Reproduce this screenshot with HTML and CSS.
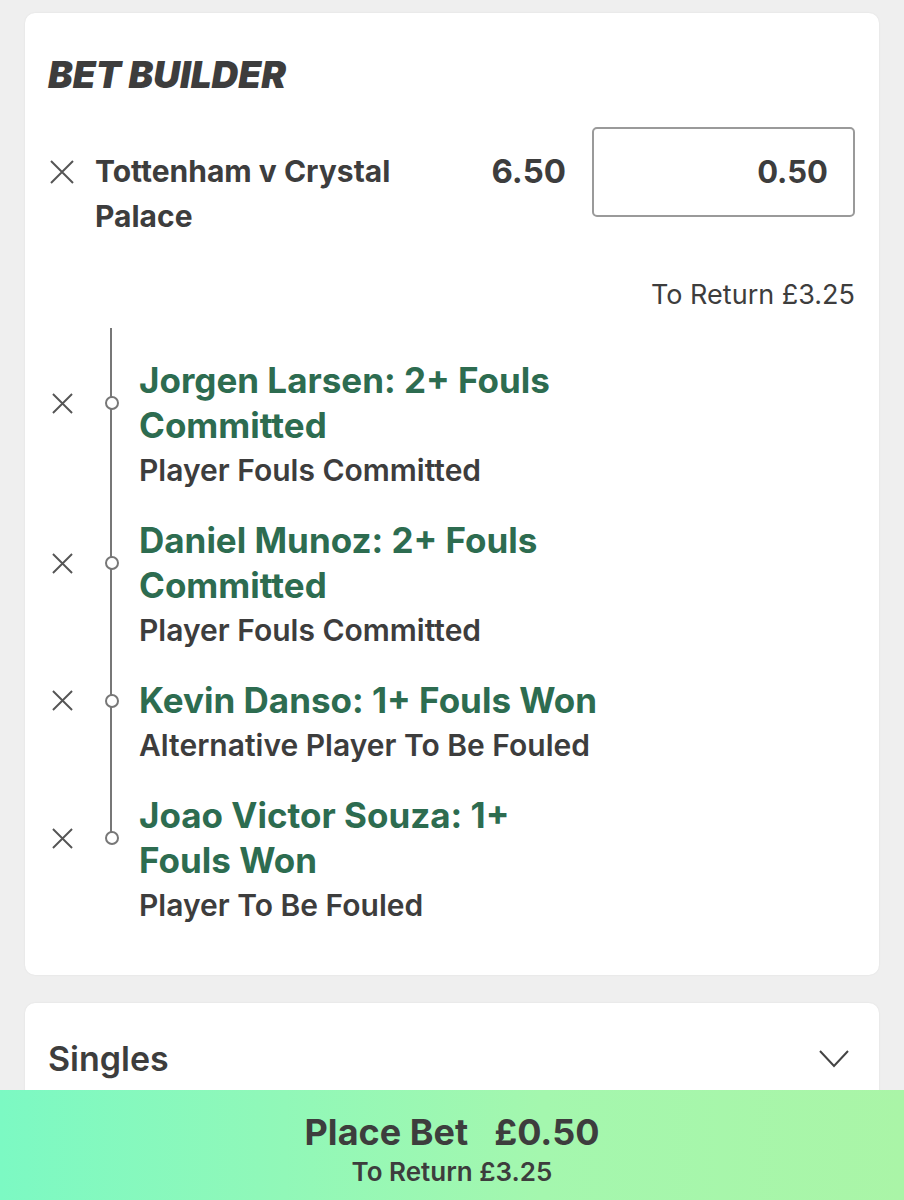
FILE: index.html
```html
<!DOCTYPE html>
<html>
<head>
    <title>Bet Slip</title>
    <link rel="stylesheet" href="styles.css">
</head>
<body>
    <div class="page">
        <div class="card builder">
            <h1 class="card-title">BET BUILDER</h1>

            <div class="main-row">
                <span class="remove big">
                    <svg viewBox="0 0 24 24" width="24" height="24"><path d="M1 1L23 23M23 1L1 23" /></svg>
                </span>
                <div class="match">Tottenham v Crystal Palace</div>
                <div class="odds">6.50</div>
                <div class="stake">0.50</div>
            </div>
            <div class="returns">To Return £3.25</div>

            <!-- Selections -->
            <div class="legs">
                <div class="leg">
                    <span class="remove">
                        <svg viewBox="0 0 22 22" width="21" height="21"><path d="M1 1L21 21M21 1L1 21" /></svg>
                    </span>
                    <span class="node"></span>
                    <div class="leg-name">Jorgen Larsen: 2+ Fouls Committed</div>
                    <div class="leg-market">Player Fouls Committed</div>
                </div>
                <div class="leg">
                    <span class="remove">
                        <svg viewBox="0 0 22 22" width="21" height="21"><path d="M1 1L21 21M21 1L1 21" /></svg>
                    </span>
                    <span class="node"></span>
                    <div class="leg-name">Daniel Munoz: 2+ Fouls Committed</div>
                    <div class="leg-market">Player Fouls Committed</div>
                </div>
                <div class="leg">
                    <span class="remove">
                        <svg viewBox="0 0 22 22" width="21" height="21"><path d="M1 1L21 21M21 1L1 21" /></svg>
                    </span>
                    <span class="node"></span>
                    <div class="leg-name">Kevin Danso: 1+ Fouls Won</div>
                    <div class="leg-market">Alternative Player To Be Fouled</div>
                </div>
                <div class="leg">
                    <span class="remove">
                        <svg viewBox="0 0 22 22" width="21" height="21"><path d="M1 1L21 21M21 1L1 21" /></svg>
                    </span>
                    <span class="node"></span>
                    <div class="leg-name">Joao Victor Souza: 1+ Fouls Won</div>
                    <div class="leg-market">Player To Be Fouled</div>
                </div>
            </div>
        </div>

        <div class="card singles">
            <span class="singles-title">Singles</span>
            <svg class="chevron" viewBox="0 0 30 18" width="30" height="18"><path d="M1 1L15 16L29 1" /></svg>
        </div>
    </div>

    <div class="place-bet">
        <div class="place-main"><span>Place Bet</span><span>£0.50</span></div>
        <div class="place-sub">To Return £3.25</div>
    </div>
</body>
</html>
```

FILE: styles.css
```css
body {
    margin: 0;
    background-color: #efefef;
    font-family: Inter, Roboto, "Liberation Sans", sans-serif;
    color: #3d3d3d;
}
.page {
    padding: 13px 25px 0;
}
.card {
    background-color: #fff;
    border-radius: 10px;
    box-shadow: 0 0 2px rgba(0,0,0,0.08);
}
.builder {
    padding: 40px 24px 47px 23px;
}
.card-title {
    margin: 0;
    font-size: 37px;
    line-height: 44px;
    font-weight: 900;
    font-style: italic;
}
/* Match row */
.main-row {
    display: flex;
    align-items: flex-start;
    margin-top: 30px;
}
.remove {
    display: flex;
    align-items: center;
    justify-content: center;
}
.remove svg path {
    stroke: #555;
    stroke-width: 2;
    fill: none;
}
.remove.big {
    width: 28px;
    height: 45px;
    margin-top: 22px;
    justify-content: flex-start;
    padding-left: 2px;
}
.match {
    width: 330px;
    margin-left: 17px;
    margin-top: 22px;
    font-size: 30px;
    line-height: 45px;
    font-weight: 700;
}
.odds {
    margin-left: auto;
    margin-top: 22px;
    font-size: 33px;
    line-height: 45px;
    font-weight: 700;
}
.stake {
    width: 263px;
    height: 90px;
    margin-left: 26px;
    box-sizing: border-box;
    border: 2px solid #9a9a9a;
    border-radius: 5px;
    padding-right: 25px;
    text-align: right;
    font-size: 31px;
    line-height: 86px;
    font-weight: 700;
}
.returns {
    margin-top: 41px;
    text-align: right;
    font-size: 27px;
    line-height: 30px;
}
/* Selections timeline */
.legs {
    position: relative;
    margin-top: 18px;
    padding-top: 30px;
    display: flex;
    flex-direction: column;
    gap: 25px;
}
.legs::before {
    content: "";
    position: absolute;
    left: 62px;
    top: 0;
    bottom: 91px;
    width: 2px;
    background-color: #777;
}
.leg {
    display: grid;
    grid-template-columns: 28px 63px 1fr;
    align-items: center;
}
.node {
    position: relative;
    z-index: 1;
    width: 10px;
    height: 10px;
    margin-left: 29px;
    border: 2px solid #777;
    border-radius: 50%;
    background-color: #fff;
}
.leg-name {
    max-width: 462px;
    color: #2d6c50;
    font-size: 35px;
    line-height: 45px;
    font-weight: 700;
}
.leg-market {
    grid-column: 3;
    font-size: 30px;
    line-height: 45px;
    font-weight: 600;
}
/* Singles */
.singles {
    display: flex;
    align-items: center;
    justify-content: space-between;
    margin-top: 28px;
    padding: 33px 30px 80px 23px;
}
.singles-title {
    font-size: 34px;
    line-height: 45px;
    font-weight: 600;
}
.chevron path {
    stroke: #444;
    stroke-width: 2;
    fill: none;
}
/* Footer button */
.place-bet {
    position: fixed;
    left: 0;
    right: 0;
    bottom: 0;
    height: 110px;
    background: linear-gradient(to right, #7cf9c3, #a4f7ae 60%, #aaf5a7);
    text-align: center;
}
.place-main {
    display: flex;
    justify-content: center;
    gap: 26px;
    padding-top: 20px;
    font-size: 36px;
    line-height: 44px;
    font-weight: 700;
}
.place-sub {
    font-size: 26px;
    line-height: 30px;
    font-weight: 600;
    margin-top: 3px;
}
```
